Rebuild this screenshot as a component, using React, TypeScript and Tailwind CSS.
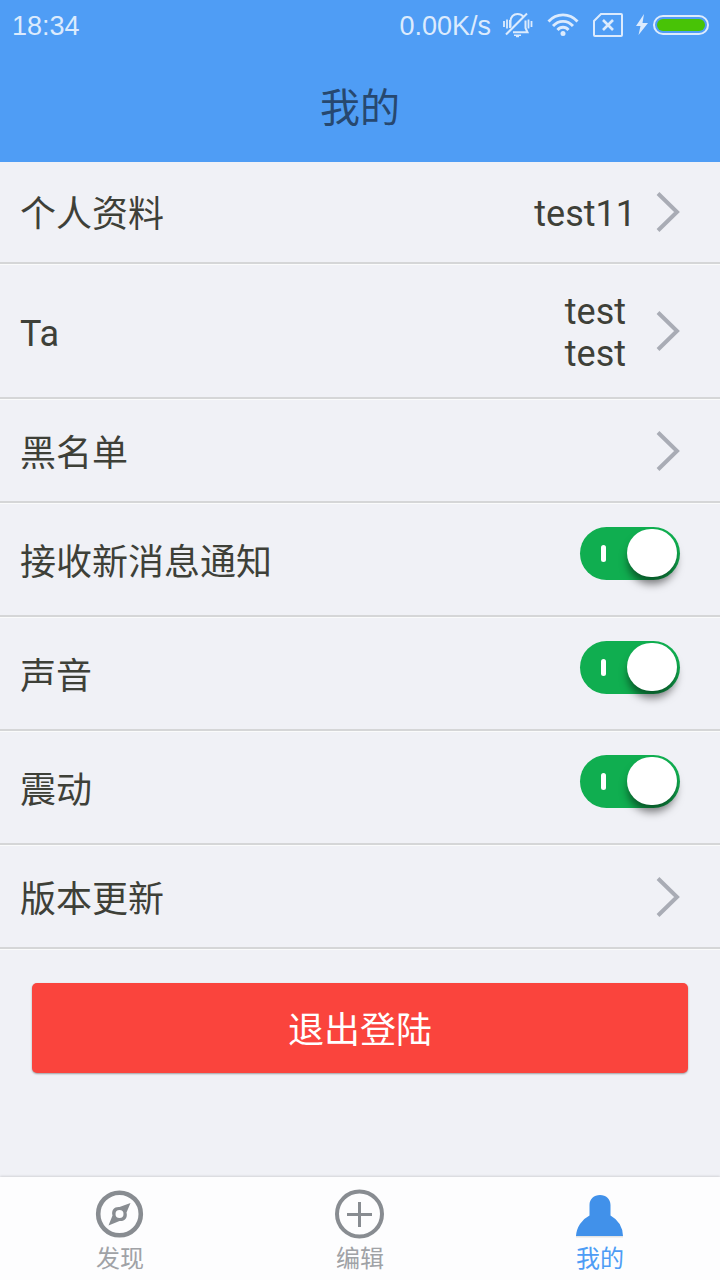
import { useState } from "react";
import type { ReactNode } from "react";

function BellOffIcon() {
  return (
    <svg width="30" height="26" viewBox="0 0 30 26" fill="none" stroke="currentColor" strokeWidth="2">
      <path d="M1 9v6M4 7.5v9M7 8v8M28.500 9v6M25.500 7.500v9" strokeWidth="1.8" />
      <path d="M7.500 15V9.500C7.500 5 10.500 2 14.500 2c2.500 0 4.500 1 5.800 2.700" strokeWidth="2" />
      <path d="M22.500 8.500v7.500l2 4.300H10" strokeWidth="2" />
      <path d="M24 1.500L3 22.500" strokeWidth="2" />
      <path d="M11 23.300h7M13 24.500h3" strokeWidth="1.400" />
    </svg>
  );
}

function WifiIcon() {
  return (
    <svg width="32" height="24" viewBox="0 0 32 24" fill="none" stroke="currentColor" strokeWidth="2.800">
      <path d="M1.500 8.500C9.500 -0.300 22.500 -0.300 30.500 8.500" />
      <path d="M6 13C11.500 6.700 20.500 6.700 26 13" />
      <path d="M10.500 17C13.500 13.300 18.500 13.300 21.500 17" />
      <circle cx="16" cy="20.500" r="2.500" fill="currentColor" stroke="none" />
    </svg>
  );
}

function SimIcon() {
  return (
    <svg width="30" height="24" viewBox="0 0 30 24" fill="none" stroke="currentColor" strokeWidth="2">
      <path d="M8 1h20q1 0 1 1v20q0 1-1 1H2q-1 0-1-1V8z" />
      <path d="M10 7l10 10M20 7L10 17" strokeWidth="2.600" />
    </svg>
  );
}

function BatteryIcon() {
  return (
    <svg width="74" height="22" viewBox="0 0 74 22">
      <path d="M9 0L1 12h4.500L3.500 21 13 9H7.500z" fill="currentColor" />
      <rect x="19" y="2" width="54" height="18" rx="9" fill="none" stroke="currentColor" strokeWidth="2" />
      <rect x="22" y="5" width="48" height="12" rx="6" fill="#48c306" />
    </svg>
  );
}

function Chevron() {
  return (
    <svg className="shrink-0" width="24" height="40" viewBox="0 0 24 40" fill="none" stroke="#a9acb5" strokeWidth="4">
      <path d="M2 1.500L21 20 2 38.500" />
    </svg>
  );
}

function CompassIcon() {
  return (
    <svg width="50" height="50" viewBox="0 0 50 50">
      <circle cx="24.500" cy="25" r="21.300" fill="none" stroke="#888c91" strokeWidth="4.600" />
      <path
        fillRule="evenodd"
        fill="#888c91"
        d="M35.500 14L31.500 23.500C33 29 29.500 32.500 24.500 32L13.500 36.500 17.500 26.500C16 21 19.500 17.500 24.500 18zM24.500 21a4 4 0 100 8 4 4 0 000-8z"
      />
    </svg>
  );
}

function PlusIcon() {
  return (
    <svg width="50" height="50" viewBox="0 0 50 50" fill="none" stroke="#888c91">
      <circle cx="24.500" cy="25" r="22.500" strokeWidth="4" />
      <path d="M12 25.500h25M24.500 13v25" strokeWidth="3" />
    </svg>
  );
}

function PersonIcon() {
  return (
    <svg width="50" height="50" viewBox="0 0 50 50">
      <path d="M1 47.800h47" stroke="#e3e3e3" strokeWidth="1.500" />
      <path
        fill="#4191ea"
        d="M14.500 26.500V16C14.500 10 19 6 25 6S35.500 10 35.500 16V26.500A24.500 24.500 0 0 1 48 47H1A24.500 24.500 0 0 1 14.500 26.500z"
      />
    </svg>
  );
}

const rowClass = "flex w-full items-center justify-between pl-5 pr-10 text-left";

function Divider() {
  return <div className="h-[3px] border-t-2 border-[#d5d6d7] bg-[#fafbfb]" />;
}

function LinkRow({ label, children }: { label: string; children?: ReactNode }) {
  return (
    <li>
      <button type="button" className={`${rowClass} py-[22px] ${children ? "min-h-[100px]" : "min-h-[101px]"}`}>
        <span className="pt-1.5">{label}</span>
        <span className="flex items-center gap-5">
          {children}
          <Chevron />
        </span>
      </button>
      <Divider />
    </li>
  );
}

function SwitchRow({ id, label }: { id: string; label: string }) {
  const [on, setOn] = useState(true);
  return (
    <li>
      <div className={`${rowClass} min-h-[111px]`}>
        <label htmlFor={id} className="pt-1.5">{label}</label>
        <input
          id={id}
          type="checkbox"
          role="switch"
          checked={on}
          onChange={(e) => setOn(e.target.checked)}
          className="relative mb-3 h-[53px] w-[100px] shrink-0 appearance-none rounded-full bg-[#a5a9ad] before:absolute before:left-[21px] before:top-[18px] before:h-[17px] before:w-[5px] before:rounded-full before:bg-white after:absolute after:left-[3px] after:top-[2px] after:h-12 after:w-[50px] after:rounded-full after:bg-white after:shadow-[0_8px_8px_-1px_rgba(0,0,0,0.5)] checked:bg-[#10ae50] checked:after:left-[47px]"
        />
      </div>
      <Divider />
    </li>
  );
}

function Tab({ label, active, children }: { label: string; active?: boolean; children: ReactNode }) {
  return (
    <a
      href="#"
      aria-current={active ? "page" : undefined}
      className={`flex flex-1 flex-col items-center pt-3 text-2xl leading-10 ${active ? "text-[#4d9cf5]" : "text-[#a0a2a6]"}`}
    >
      {children}
      <span>{label}</span>
    </a>
  );
}

export default function App() {
  return (
    <div className="flex min-h-screen flex-col bg-[#f0f1f6] font-[Roboto,'Noto_Sans_CJK_SC',sans-serif] text-[36px] leading-[42px] text-[#3e4038]">
      <header className="bg-[#4f9df5]">
        <div className="flex h-[50px] items-center justify-between pl-3 pr-[11px] font-['Liberation_Sans',sans-serif] text-[27px] text-[#dcebfd]">
          <time className="pt-0.5">18:34</time>
          <div className="flex items-center">
            <span className="mr-3 pt-0.5">0.00K/s</span>
            <span className="mr-[14px]"><BellOffIcon /></span>
            <span className="mr-[14px]"><WifiIcon /></span>
            <span className="mr-3"><SimIcon /></span>
            <BatteryIcon />
          </div>
        </div>
        <h1 className="pb-[29px] pt-[35px] text-center text-[40px] leading-[48px] text-[#27486f]">我的</h1>
      </header>

      <main className="flex-1">
        <ul>
          <LinkRow label="个人资料"><span className="pt-1">test11</span></LinkRow>
          <LinkRow label="Ta">
            <span className="mr-2.5 pt-1">
              test
              <br />
              test
            </span>
          </LinkRow>
          <LinkRow label="黑名单" />
          <SwitchRow id="notify" label="接收新消息通知" />
          <SwitchRow id="sound" label="声音" />
          <SwitchRow id="vibrate" label="震动" />
          <LinkRow label="版本更新" />
        </ul>
        <div className="px-8 py-[33px]">
          <button
            type="button"
            className="h-[90px] w-full rounded-[5px] bg-[#fa443d] pt-1.5 text-white shadow-[0_1px_2px_rgba(0,0,0,0.35)]"
          >
            退出登陆
          </button>
        </div>
      </main>

      <nav className="flex h-[103px] bg-[#fdfdfe] shadow-[0_-1px_2px_rgba(0,0,0,0.12)]">
        <Tab label="发现"><CompassIcon /></Tab>
        <Tab label="编辑"><PlusIcon /></Tab>
        <Tab label="我的" active><PersonIcon /></Tab>
      </nav>
    </div>
  );
}
